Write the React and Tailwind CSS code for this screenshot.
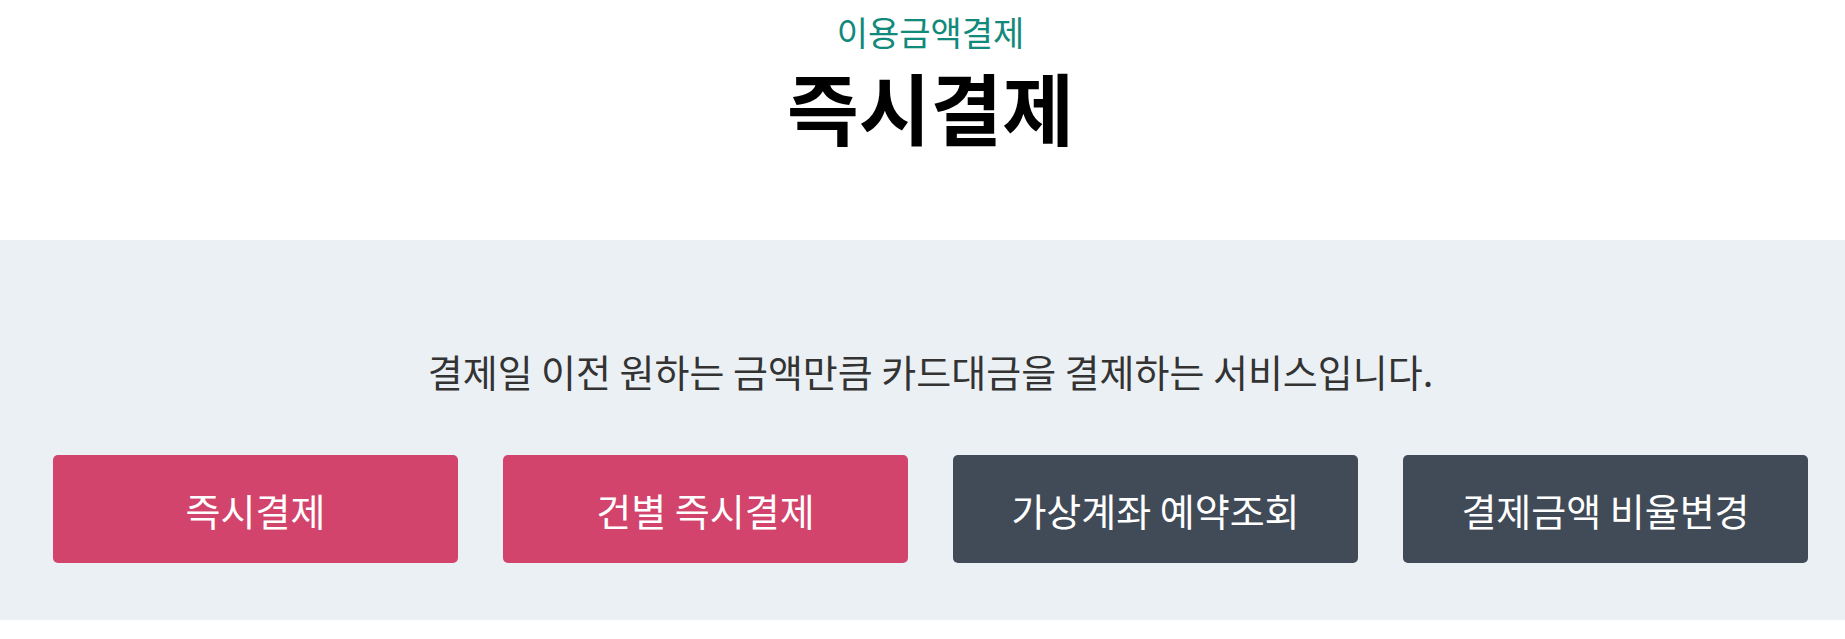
export default function App() {
  const buttons = [
    { label: "즉시결제", cls: "bg-[#d2446b]" },
    { label: "건별 즉시결제", cls: "bg-[#d2446b]" },
    { label: "가상계좌 예약조회", cls: "bg-[#414b58]" },
    { label: "결제금액 비율변경", cls: "bg-[#414b58]" },
  ];
  return (
    <div className="w-full min-h-[639px] bg-white [font-family:'Noto_Sans_CJK_KR','Noto_Sans',sans-serif]">
      <header className="h-[240px] pl-[53px] pr-[37px] flex flex-col items-center">
        <p className="mt-[15px] text-[34px] leading-[34px] text-[#11897b]">이용금액결제</p>
        <h1 className="mt-[2px] text-[78px] leading-[110px] font-bold text-black">즉시결제</h1>
      </header>
      <section className="h-[380px] bg-[#ebf0f4] pl-[53px] pr-[37px] flex flex-col items-center">
        <p className="mt-[109px] text-[38px] leading-[44px] text-[#333333]">
          결제일 이전 원하는 금액만큼 카드대금을 결제하는 서비스입니다.
        </p>
        <div className="mt-[62px] w-full grid grid-cols-4 gap-[45px]">
          {buttons.map((b) => (
            <button
              key={b.label}
              className={`${b.cls} h-[108px] rounded-[5px] text-white text-[38px] flex items-center justify-center`}
            >
              {b.label}
            </button>
          ))}
        </div>
      </section>
    </div>
  );
}
